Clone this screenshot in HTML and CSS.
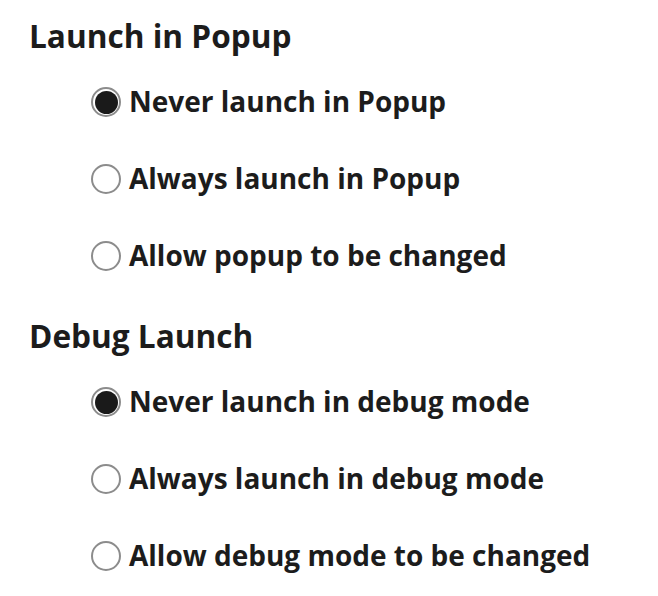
FILE: index.html
```html
<!DOCTYPE html>
<html>
<head>
<meta charset="utf-8">
<link rel="stylesheet" href="styles.css">
</head>
<body>
<div class="page">
  <section class="group">
    <h2 class="title">Launch in Popup</h2>
    <div class="options">
      <label class="option"><span class="radio checked"></span><span class="text">Never launch in Popup</span></label>
      <label class="option"><span class="radio"></span><span class="text">Always launch in Popup</span></label>
      <label class="option"><span class="radio"></span><span class="text">Allow popup to be changed</span></label>
    </div>
  </section>
  <section class="group">
    <h2 class="title">Debug Launch</h2>
    <div class="options">
      <label class="option"><span class="radio checked"></span><span class="text">Never launch in debug mode</span></label>
      <label class="option"><span class="radio"></span><span class="text">Always launch in debug mode</span></label>
      <label class="option"><span class="radio"></span><span class="text">Allow debug mode to be changed</span></label>
    </div>
  </section>
</div>
</body>
</html>
```
FILE: styles.css
```css
html, body {
  margin: 0;
  padding: 0;
  background: #ffffff;
}
body {
  font-family: "Open Sans", "Liberation Sans", sans-serif;
  color: #1c1c1c;
}
.page {
  display: flex;
  flex-direction: column;
  gap: 39px;
  padding: 14px 0 0 29px;
}
.group {
  display: flex;
  flex-direction: column;
}
.title {
  margin: 0;
  font-size: 31.6px;
  line-height: 44px;
  font-weight: 700;
}
.options {
  display: flex;
  flex-direction: column;
  gap: 37px;
  margin-top: 23px;
  padding-left: 62px;
}
.option {
  display: flex;
  align-items: center;
  gap: 8px;
  font-size: 28px;
  line-height: 40px;
  font-weight: 700;
}
.radio {
  box-sizing: border-box;
  width: 30px;
  height: 30px;
  border: 2px solid #8c8c8c;
  border-radius: 50%;
  background: #ffffff;
  position: relative;
  top: 1px;
  flex: none;
}
.radio.checked::after {
  content: "";
  position: absolute;
  left: 1.5px;
  top: 1.5px;
  width: 23px;
  height: 23px;
  border-radius: 50%;
  background: #1a1a1a;
}
```
